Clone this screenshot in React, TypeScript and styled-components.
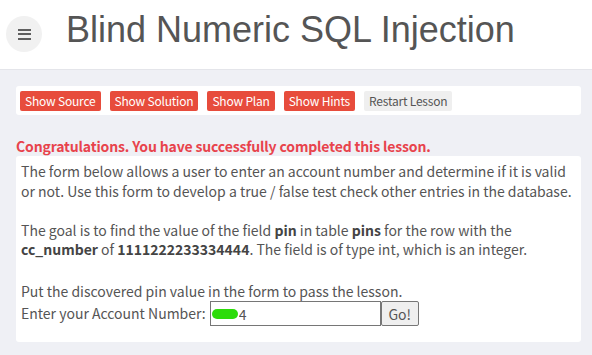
import styled, { createGlobalStyle } from "styled-components";

const GlobalStyle = createGlobalStyle`
  html, body {
    margin: 0;
    padding: 0;
    background: #eff0f5;
  }
  body {
    font-family: "Noto Sans CJK KR", "Noto Sans", sans-serif;
    color: #555;
  }
`;

const buttons = [
    { label: "Show Source", kind: "danger" },
    { label: "Show Solution", kind: "danger" },
    { label: "Show Plan", kind: "danger" },
    { label: "Show Hints", kind: "danger" },
    { label: "Restart Lesson", kind: "plain" },
];

const App = () => {
    return <Page>
        <GlobalStyle />
        <Header>
            <MenuBtn>
                <MenuBar />
                <MenuBar />
                <MenuBar />
            </MenuBtn>
            <Title>Blind Numeric SQL Injection</Title>
        </Header>

        <Main>
            <ButtonBar>
                {buttons.map((b) => (
                    <LessonBtn key={b.label} $kind={b.kind}>{b.label}</LessonBtn>
                ))}
            </ButtonBar>

            <Feedback>Congratulations. You have successfully completed this lesson.</Feedback>

            <Content>
                <p>
                    The form below allows a user to enter an account number and determine if it is valid
                    or not. Use this form to develop a true / false test check other entries in the database.
                </p>
                <p>
                    The goal is to find the value of the field <b>pin</b> in table <b>pins</b> for the row with the{" "}
                    <b>cc_number</b> of <b>1111222233334444</b>. The field is of type int, which is an integer.
                </p>
                <p>Put the discovered pin value in the form to pass the lesson.</p>
                <FormRow>
                    <span>Enter your Account Number:</span>
                    <InputWrap>
                        {/* first digits are scribbled over in green */}
                        <AccountInput type="text" defaultValue="4" readOnly />
                        <Redact />
                    </InputWrap>
                    <GoBtn>Go!</GoBtn>
                </FormRow>
            </Content>
        </Main>
    </Page>
};

const Page = styled.div`
  width: 592px;
  min-height: 355px;
`;

const Header = styled.div`
  height: 70px;
  background: #fff;
  border-bottom: 1px solid #e4e5ea;
  box-sizing: border-box;
  display: flex;
  align-items: center;
  padding-left: 6px;
`;

const MenuBtn = styled.div`
  width: 36px;
  height: 36px;
  border-radius: 50%;
  background: #f1f1f1;
  display: flex;
  flex-direction: column;
  justify-content: center;
  align-items: center;
  gap: 2.5px;
  margin-top: -1px;
`;

const MenuBar = styled.div`
  width: 13px;
  height: 2px;
  background: #606060;
`;

const Title = styled.h1`
  margin: 0 0 0 24px;
  font-family: "Liberation Sans", Arial, sans-serif;
  font-weight: 400;
  font-size: 36px;
  color: #555;
  padding-bottom: 10px;
`;

const Main = styled.div`
  padding: 16px 11px 15px 16px;
`;

const ButtonBar = styled.div`
  background: #fff;
  border-radius: 3px;
  height: 29px;
  box-sizing: border-box;
  padding: 4px 4px;
  display: flex;
  align-items: center;
  gap: 9px;
`;

const LessonBtn = styled.button<{ $kind: string }>`
  font-family: "Noto Sans CJK KR", "Noto Sans", sans-serif;
  font-size: 12px;
  letter-spacing: -0.2px;
  height: 20px;
  line-height: 18px;
  padding: 0 5px;
  border: none;
  border-radius: 2px;
  background: ${({ $kind }) => ($kind === "danger" ? "#e74c3c" : "#efefef")};
  color: ${({ $kind }) => ($kind === "danger" ? "#fff" : "#555")};
`;

const Feedback = styled.div`
  margin-top: 22px;
  font-size: 14px;
  font-weight: 600;
  letter-spacing: -0.15px;
  color: #e8434c;
  line-height: 19px;
`;

const Content = styled.div`
  background: #fff;
  border-radius: 3px;
  padding: 6px 5px 16px 5px;
  font-size: 14px;
  line-height: 19.5px;
  color: #555;

  p {
    margin: 0 0 19.5px 0;
  }
  p:nth-of-type(2) {
    margin-bottom: 22px;
  }
  p:nth-of-type(3) {
    margin-bottom: 0;
  }
  b {
    font-weight: 700;
    color: #444;
  }
`;

const FormRow = styled.div`
  display: flex;
  align-items: center;
  gap: 4px;
`;

const InputWrap = styled.div`
  position: relative;
  display: flex;
`;

const AccountInput = styled.input`
  width: 171px;
  height: 25px;
  box-sizing: border-box;
  border: 1px solid #767676;
  border-radius: 0;
  padding: 0 2px 0 28px;
  font-family: "Noto Sans CJK KR", "Noto Sans", sans-serif;
  font-size: 14px;
  color: #555;
  outline: none;
`;

const Redact = styled.div`
  position: absolute;
  left: 2px;
  top: 8px;
  width: 26px;
  height: 10px;
  border-radius: 5px;
  background: #2ddc0a;
`;

const GoBtn = styled.button`
  height: 25px;
  width: 38px;
  margin-left: -4px;
  box-sizing: border-box;
  border: 1px solid #767676;
  border-radius: 2px;
  background: #efefef;
  font-family: "Noto Sans CJK KR", "Noto Sans", sans-serif;
  font-size: 14px;
  color: #555;
  padding: 0;
`;

export default App;
